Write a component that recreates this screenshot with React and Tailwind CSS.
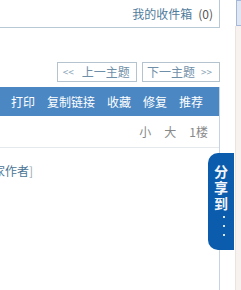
import React from 'react';

const font = { fontFamily: '"Noto Sans CJK SC", "Liberation Sans", sans-serif' };

const App = () => {
  return (
    <div className="relative flex h-[290px] w-[241px] overflow-hidden bg-white text-[12px] leading-none" style={font}>
      <div className="flex w-[220px] flex-col">
        <div className="flex h-[28px] items-center justify-end border-b border-r border-[#b7c9d5] pr-[6px]">
          <span className="text-[#4f7b9b]">我的收件箱</span>
          <span className="ml-[6px] text-[#555]">(0)</span>
        </div>

        <div className="mt-[34px] flex justify-end gap-[5px]">
          <button className="flex h-[20px] items-center border border-[#b4c3cd] bg-white pl-[5px] pr-[6px] text-[#6f8fa8]">
            <span className="mr-[8px] text-[10px] text-[#8aa3b5]">&lt;&lt;</span>
            上一主题
          </button>
          <button className="flex h-[20px] items-center border border-[#b4c3cd] bg-white pl-[4px] pr-[7px] text-[#6f8fa8]">
            下一主题
            <span className="ml-[6px] text-[10px] text-[#8aa3b5]">&gt;&gt;</span>
          </button>
        </div>

        <div className="mt-[5px] flex flex-1 flex-col border-r border-[#c4d5e1]">
          <div className="flex h-[29px] items-center justify-end gap-[12px] bg-[#4b87c3] pr-[16px] text-white">
            <span>打印</span>
            <span>复制链接</span>
            <span>收藏</span>
            <span>修复</span>
            <span>推荐</span>
          </div>
          <div className="flex h-[32px] items-center justify-end gap-[13px] border-b border-[#e6e9ec] pr-[11px] text-[#888]">
            <span>小</span>
            <span>大</span>
            <span>1楼</span>
          </div>
          <div className="ml-[-7px] pt-[17px]">
            <span className="text-[#4a7596]">家作者</span>
            <span className="text-[#9aa]">]</span>
          </div>
        </div>
      </div>

      <div className="flex w-[21px] flex-col">
        <div className="flex h-[26px]">
          <div className="w-[16px]" />
          <div className="flex-1 border border-r-0 border-[#a6b7d8] bg-[#dfe6f4]" />
        </div>
        <div className="flex flex-1">
          <div className="w-[15px]" />
          <div className="flex-1 border-l border-[#ebe3de] bg-[#f7f2ef]" />
        </div>
      </div>

      <div className="absolute left-[208px] top-[153px] flex h-[97px] w-[26px] flex-col items-center rounded-l-[10px] bg-[#0b5cad] pt-[12px] text-[#f2f6fb]">
        <span className="text-[14px] font-semibold leading-[16px] tracking-[2px] [writing-mode:vertical-rl]">分享到</span>
        <div className="mt-[3px] flex flex-col gap-[7px] pl-[5px]">
          <div className="h-[2px] w-[2px] bg-[#dbe6f3]" />
          <div className="h-[2px] w-[2px] bg-[#dbe6f3]" />
          <div className="h-[2px] w-[2px] bg-[#dbe6f3]" />
        </div>
      </div>
    </div>
  );
};

export default App;
